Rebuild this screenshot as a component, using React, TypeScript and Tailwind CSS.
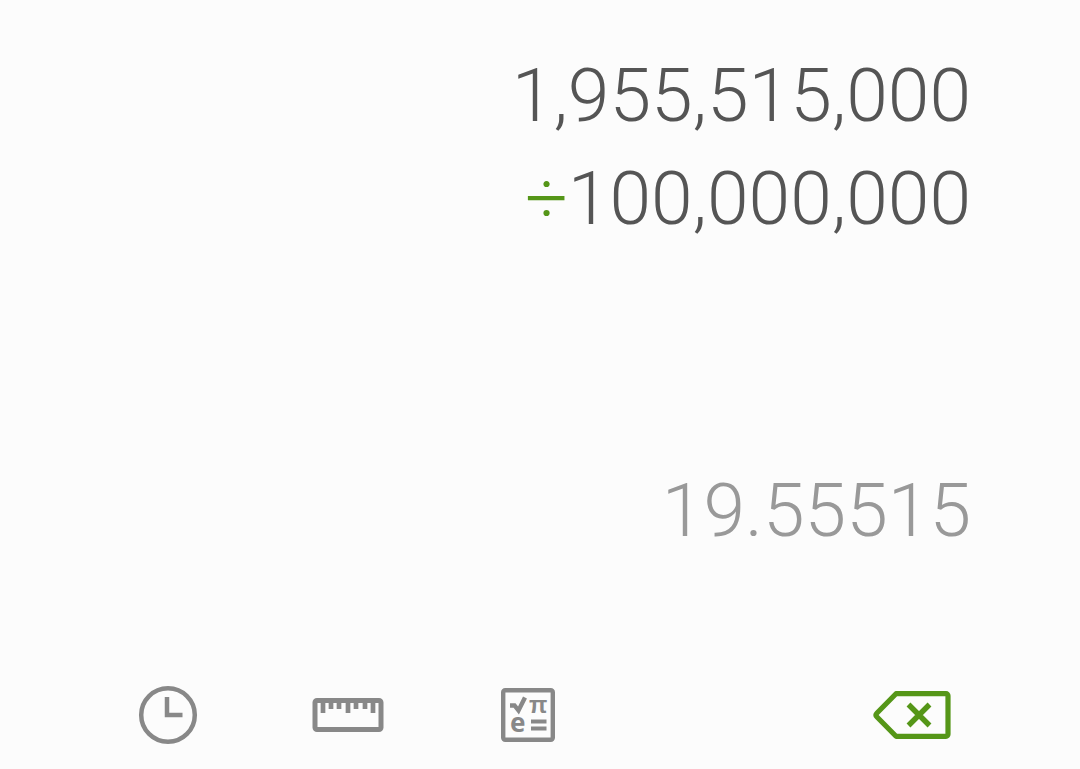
import type { ReactNode } from "react";

const expression = [
  { operator: "", value: "1,955,515,000" },
  { operator: "÷", value: "100,000,000" },
];

const result = "19.55515";

function ClockIcon() {
  return (
    <svg width="60" height="60" viewBox="0 0 60 60" fill="none" stroke="currentColor" strokeWidth="4.5" aria-hidden="true">
      <circle cx="30" cy="30" r="26.8" />
      <path d="M29 12V30H44.500" />
    </svg>
  );
}

function RulerIcon() {
  return (
    <svg width="72" height="36" viewBox="0 0 72 36" fill="none" stroke="currentColor" aria-hidden="true">
      <rect x="3" y="3.500" width="66" height="29" rx="2" strokeWidth="5" />
      <path d="M11 5v11M19 5v7M27 5v7M36 5v11M44 5v7M53 5v7M61 5v11" strokeWidth="4.7" />
    </svg>
  );
}

function ScientificIcon() {
  return (
    <svg width="54" height="54" viewBox="0 0 54 54" fill="none" stroke="currentColor" className="overflow-visible" aria-hidden="true">
      <rect x="2.2" y="2.2" width="49.600" height="49.600" rx="2" strokeWidth="4.4" />
      <path d="M9 17.500h4.500l4 5 6.500-13" strokeWidth="4.4" />
      <path d="M30 33.500h15.500M30 40.500h15.500" strokeWidth="4" />
      <text x="9" y="44" fill="currentColor" stroke="none" className="font-['Noto_Sans',sans-serif] text-[26px] font-bold">
        e
      </text>
      <text x="28" y="25" fill="currentColor" stroke="none" className="font-['Liberation_Sans',sans-serif] text-[24px] font-bold">
        π
      </text>
    </svg>
  );
}

function BackspaceIcon() {
  return (
    <svg width="78" height="50" viewBox="0 0 78 50" fill="none" stroke="currentColor" aria-hidden="true">
      <path d="M23 3.700H73a2 2 0 0 1 2 2V44.300a2 2 0 0 1-2 2H23L4 27q-2-2 0-4z" strokeWidth="5.2" strokeLinejoin="round" />
      <path d="M35.500 14.500l21 21M56.500 14.500l-21 21" strokeWidth="5.4" />
    </svg>
  );
}

function ToolButton({ label, className = "", children }: { label: string; className?: string; children: ReactNode }) {
  return (
    <button type="button" aria-label={label} className={`flex h-full w-[180px] items-center justify-center ${className}`}>
      {children}
    </button>
  );
}

export default function App() {
  return (
    <main className="flex min-h-screen flex-col bg-[#fcfcfc] font-[Roboto,sans-serif] font-light">
      <section className="flex flex-1 flex-col justify-between pt-11 pr-[109px] pb-[99px] text-right text-[75px] leading-[103px] text-[#555555]">
        <div>
          {expression.map((line) => (
            <p key={line.value}>
              {line.operator && <span className="text-[#559618]">{line.operator}</span>}
              {line.value}
            </p>
          ))}
        </div>
        <output className="block text-[#999999]">{result}</output>
      </section>
      <nav className="flex h-[108px] items-center px-[78px] text-[#888888]">
        <ToolButton label="History">
          <ClockIcon />
        </ToolButton>
        <ToolButton label="Unit converter">
          <RulerIcon />
        </ToolButton>
        <ToolButton label="Scientific mode">
          <ScientificIcon />
        </ToolButton>
        <ToolButton label="Backspace" className="ml-auto text-[#559618]">
          <BackspaceIcon />
        </ToolButton>
      </nav>
    </main>
  );
}
